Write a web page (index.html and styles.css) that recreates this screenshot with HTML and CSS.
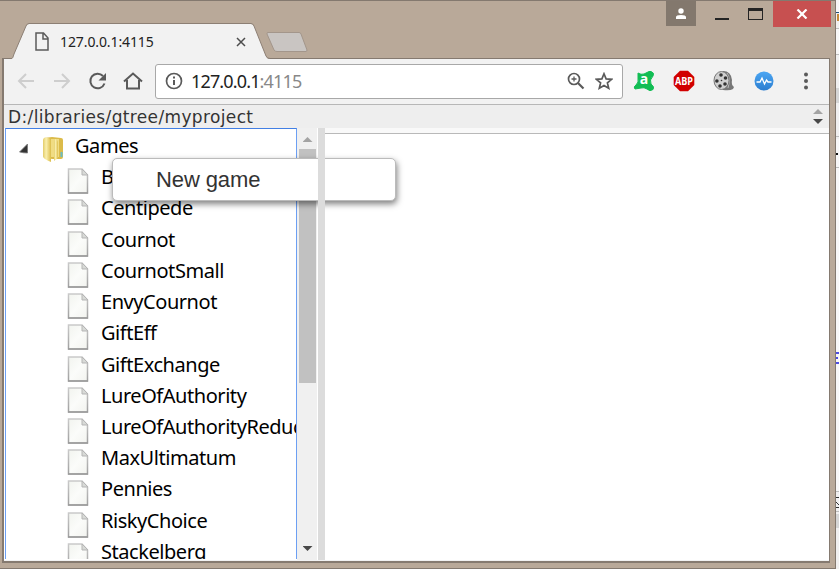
FILE: index.html
```html
<!DOCTYPE html>
<html lang="en">
<head>
<meta charset="utf-8">
<title>127.0.0.1:4115</title>
<link rel="stylesheet" href="styles.css">
</head>
<body>
<svg class="defs" width="0" height="0">
  <defs>
    <linearGradient id="pageFill" x1="0" y1="0" x2="1" y2="1"><stop offset="0" stop-color="#f2f4ef"/><stop offset=".5" stop-color="#fbfcfa"/><stop offset="1" stop-color="#f2f3ef"/></linearGradient>
    <linearGradient id="pageEdge" x1="0" y1="0" x2="0" y2="1"><stop offset="0" stop-color="#cacaca"/><stop offset="1" stop-color="#a0a0a0"/></linearGradient>
    <linearGradient id="gold" x1="0" y1="0" x2="1" y2="0"><stop offset="0" stop-color="#e3cc69"/><stop offset=".4" stop-color="#faefad"/><stop offset="1" stop-color="#dcbd4b"/></linearGradient>
    <linearGradient id="blue" x1="0" y1="0" x2="0" y2="1"><stop offset="0" stop-color="#4ba6f3"/><stop offset="1" stop-color="#2c7ed0"/></linearGradient>
    <symbol id="file" viewBox="0 0 22 26"><path d="M1.500 1h13.500l5.500 6v18h-19z" fill="url(#pageFill)" stroke="url(#pageEdge)" stroke-width="1.500"/><path d="M1 25h20" stroke="#999" stroke-width="1.300"/><path d="M15 1v6h6z" fill="#d8dad7" stroke="#b5b5b5"/></symbol>
  </defs>
</svg>
<div class="desktop">
  <div class="window">
    <header class="titlebar">
      <div class="tab">
        <svg class="tab-shape" width="260" height="37" viewBox="0 0 260 37"><path d="M0 36C3 36 3 34 4 31L16 3Q17 1 19 1H241Q243 1 244 3L256 33Q257 36 260 36V37H0z" fill="#f2f2f2"/><path d="M0 35.500C3 36 3 34 4 31L16 3Q17 .5 19 .5H241Q243 .5 244 3L256 33Q257 35.500 260 35.500" fill="none" stroke="#8c7f74"/></svg>
        <svg class="tab-file" width="14" height="19" viewBox="0 0 14 19"><path d="M1 1h7.500L13 6v12H1zM8 1v6h5" fill="none" stroke="#5b5b5b" stroke-width="1.500"/></svg>
        <span class="tab-title">127.0.0.1:4115</span>
        <svg class="tab-close" width="10" height="10" viewBox="0 0 10 10"><path d="M1 1l8 8M9 1L1 9" stroke="#4c4c4c" stroke-width="1.500"/></svg>
      </div>
      <svg class="new-tab" width="44" height="22" viewBox="0 0 44 22"><path d="M3 1.500H34Q35.500 1.500 36 3L42 19Q42 20.500 41 20.500H12Q10 20.500 9 19L2 3Q1.500 1.500 3 1.500z" fill="#c9c5c2" stroke="#a3968b"/></svg>
      <div class="controls">
        <span class="profile"><svg width="12" height="12" viewBox="0 0 12 12" fill="#fff"><circle cx="6" cy="3" r="2.700"/><path d="M1 11V9Q1 7 6 7t5 2v2z"/></svg></span>
        <span class="min"></span>
        <span class="max"></span>
        <span class="close"><svg width="12" height="10" viewBox="0 0 12 10"><path d="M1.500.5l9 9M10.500.5l-9 9" stroke="#fff" stroke-width="2.200"/></svg></span>
      </div>
    </header>
    <main class="client">
      <div class="toolbar">
        <svg class="nav" width="132" height="24" viewBox="0 0 132 24" fill="none" stroke="#5a5a5a" stroke-width="2">
          <path d="M21 12H6M13 5l-7 7 7 7M41 12h15M49 5l7 7-7 7" stroke="#cecece"/>
          <path d="M90 7A7.300 7.300 0 1 0 91.500 14.500"/><path d="M93 4v7.500h-7.500z" fill="#5a5a5a" stroke="none"/>
          <path d="M111 12.500l9-8 9 8M114 11v8.500h12V11"/>
        </svg>
        <div class="address">
          <svg width="18" height="18" viewBox="0 0 18 18" fill="none" stroke="#5a5a5a"><circle cx="9" cy="9" r="7.500" stroke-width="1.700"/><path d="M9 8v5M9 4.500v2" stroke-width="2"/></svg>
          <span class="url">127.0.0.1<span class="port">:4115</span></span>
          <svg class="zoom" width="18" height="18" viewBox="0 0 18 18" fill="none" stroke="#5a5a5a"><circle cx="7" cy="7" r="5.500" stroke-width="1.700"/><path d="M4.500 7h5M7 4.500v5" stroke-width="1.300"/><path d="M11 11l5.500 5.500" stroke-width="2.200"/></svg>
          <svg class="star" width="18" height="18" viewBox="0 0 18 18"><path d="M9 1.800l2.100 5.100 5.500.4-4.200 3.600 1.300 5.300L9 13.400l-4.700 2.800 1.300-5.300-4.200-3.600 5.500-.4z" fill="none" stroke="#5a5a5a" stroke-width="1.700"/></svg>
        </div>
        <svg class="ext" width="22" height="22" viewBox="0 0 22 22"><path d="M5 3Q8 5 11 4L14 2.500Q16 1 18 1.500Q22 3 20 6Q16 10 18 14Q22 17 20 19.500Q17 22 14 19Q11 17 8 18L2 19Q0 17 3 15Q6 12 5 9z" fill="#12bd54" stroke="#12bd54"/><text x="6.800" y="14" class="avast">a</text></svg>
        <svg class="ext" width="22" height="22" viewBox="0 0 22 22"><path d="M7 .7h8L21.300 7v8L15 21.300H7L.7 15V7z" fill="#d10000"/><text x="2" y="15" class="abp" textLength="18" lengthAdjust="spacingAndGlyphs">ABP</text></svg>
        <svg class="ext" width="22" height="22" viewBox="0 0 22 22"><path d="M10 1Q18 1 19 10Q18 15 21 17L20 19Q17 21 10 20z" fill="#777"/><path d="M14 3q4 5 1 15" stroke="#bbb" fill="none"/><ellipse cx="8.500" cy="10.500" rx="7.500" ry="9" fill="#cfcfcf" stroke="#777"/><g fill="#333"><circle cx="8" cy="5" r="1.800"/><circle cx="12.500" cy="8" r="1.800"/><circle cx="12" cy="14" r="1.800"/><circle cx="7" cy="16" r="1.800"/><circle cx="3.900" cy="11" r="1.800"/><circle cx="8.500" cy="10.500" r=".8"/></g></svg>
        <svg class="ext" width="22" height="22" viewBox="0 0 22 22"><circle cx="11" cy="11" r="9.500" fill="url(#blue)"/><path d="M3.500 12H7l2-4 2.500 6 2-4 1.500 2h3.500" fill="none" stroke="#fff" stroke-width="1.300"/></svg>
        <svg class="dots" width="6" height="18" viewBox="0 0 6 18" fill="#5a5a5a"><circle cx="3" cy="2.500" r="2"/><circle cx="3" cy="9" r="2"/><circle cx="3" cy="15.500" r="2"/></svg>
      </div>
      <div class="pathbar"><span class="path">D:/libraries/gtree/myproject</span><svg width="10" height="16" viewBox="0 0 10 16"><path d="M0 5l5-5 5 5z" fill="#a3a3a3"/><path d="M0 10h10l-5 5z" fill="#484848"/></svg></div>
      <div class="panes">
        <div class="tree">
          <div class="row root"><svg width="50" height="28" viewBox="0 0 50 28"><path d="M1.500 16L9.500 8v9q-4 0-8-1z" fill="#333" stroke="#777" stroke-width=".8"/><path d="M26 2l8-1 9 1q2 0 2 2v17q0 2-2 2h-9l-8-2q-1 0-1-2z" fill="#dcbb4a"/><path d="M33 3h8v18h-8z" fill="#f0dc83"/><path d="M27 1.500q5 0 6 2.500v22q-3-1-6-3-2-1-2-3V4q0-2 2-2.500z" fill="url(#gold)"/><path d="M37 3q3 1 3 3v16l-4 3V6z" fill="url(#gold)"/><path d="M43.500 16v5" stroke="#69bcc4" stroke-width="2"/></svg><span class="label">Games</span></div>
          <div class="row"><svg class="file"><use href="#file"/></svg><span class="label">B</span></div>
          <div class="row"><svg class="file"><use href="#file"/></svg><span class="label">Centipede</span></div>
          <div class="row"><svg class="file"><use href="#file"/></svg><span class="label">Cournot</span></div>
          <div class="row"><svg class="file"><use href="#file"/></svg><span class="label">CournotSmall</span></div>
          <div class="row"><svg class="file"><use href="#file"/></svg><span class="label">EnvyCournot</span></div>
          <div class="row"><svg class="file"><use href="#file"/></svg><span class="label">GiftEff</span></div>
          <div class="row"><svg class="file"><use href="#file"/></svg><span class="label">GiftExchange</span></div>
          <div class="row"><svg class="file"><use href="#file"/></svg><span class="label">LureOfAuthority</span></div>
          <div class="row"><svg class="file"><use href="#file"/></svg><span class="label">LureOfAuthorityReduced</span></div>
          <div class="row"><svg class="file"><use href="#file"/></svg><span class="label">MaxUltimatum</span></div>
          <div class="row"><svg class="file"><use href="#file"/></svg><span class="label">Pennies</span></div>
          <div class="row"><svg class="file"><use href="#file"/></svg><span class="label">RiskyChoice</span></div>
          <div class="row"><svg class="file"><use href="#file"/></svg><span class="label">Stackelberg</span></div>
        </div>
        <div class="scrollbar"><i class="up"></i><i class="thumb"></i><i class="down"></i></div>
        <div class="splitter"></div>
        <div class="detail"></div>
        <div class="menu">New game</div>
      </div>
    </main>
  </div>
  <svg class="behind" width="3" height="569" viewBox="0 0 3 569"><path d="M0 0h3v12H0zM0 29h3v25H0zM0 139h3v352H0z" fill="#f8f7f7"/><path d="M0 88h3v15H0zM0 514h3v14H0z" fill="#d6d6d6"/><path d="M0 12.500h3" stroke="#205078"/><path d="M0 28.500h3M0 54.500h3M0 136.500h3M0 167.500h3M0 491.500h3M0 511.500h3" stroke="#bdbdbd"/><path d="M1 14h2v7H1z" fill="#c68b39"/><path d="M0 153h2v2H0z" fill="#111"/><path d="M0 353h3M0 358h2M0 363h3" stroke="#4e4ee4" stroke-width="2"/><path d="M0 497.500h3M0 502l3 3M0 507.500h3" stroke="#333"/></svg>
</div>
</body>
</html>
```
FILE: styles.css
```css
* { box-sizing: border-box; }
body { margin: 0; font-family: "Noto Sans", sans-serif; overflow: hidden; }
svg { display: block; flex: none; }
.defs { position: absolute; }
.desktop { display: flex; width: 839px; height: 569px; background: #f1f0f0; }
.window { width: 836px; height: 569px; flex: none; padding: 0 4px 6px 2px; background: #b9a999; border: solid #84796f; border-width: 1px 1px 1px 0; }
.titlebar { height: 57px; display: flex; align-items: flex-start; }
.tab { position: relative; width: 260px; height: 37px; margin: 22px 0 0 8px; display: flex; align-items: center; flex: none; }
.tab-shape { position: absolute; left: 0; top: 0; }
.tab-file { margin-left: 25px; position: relative; }
.tab-title { position: relative; width: 150px; margin-left: 11px; margin-top: -1px; font-size: 14px; letter-spacing: -.1px; color: #222; }
.tab-close { position: relative; margin-left: 26px; }
.new-tab { margin: 30px 0 0 -5px; }
.controls { display: flex; margin-left: auto; height: 26px; margin-right: 0; }
.profile { width: 30px; height: 25px; background: #83786d; display: grid; place-items: center; }
.min { width: 14px; height: 2px; background: #242424; margin: 17px 0 0 19px; }
.max { width: 15px; height: 12px; border: 1px solid #242424; border-top-width: 3px; margin: 7px 0 0 19px; }
.close { width: 58px; height: 26px; background: #c75050; display: grid; place-items: center; margin-left: 10px; }
.client { height: 505px; width: 828px; border: 2px solid #857a70; border-width: 1px 1px 2px 2px; background: #f2f2f2; overflow: hidden; }
.toolbar { height: 46px; display: flex; align-items: center; padding: 0 20px 1px 9px; border-bottom: 1px solid #b7b7b7; }
.nav { width: 132px; }
.address { display: flex; align-items: center; width: 468px; height: 35px; margin-left: 10px; padding: 0 9px; background: #fff; border: 1px solid #a8a8a8; border-radius: 3px; }
.url { margin-left: 8px; font-size: 18px; letter-spacing: -.85px; color: #222; }
.port { color: #888; }
.zoom { margin-left: auto; }
.star { margin-left: 10px; }
.ext { margin-left: 18px; }
.address + .ext { margin-left: 10px; }
.dots { margin-left: auto; }
.avast { font: bold 14px "Open Sans"; fill: #fff; }
.abp { font: bold 11px "Open Sans"; fill: #fff; }
.pathbar { height: 23px; display: flex; align-items: center; padding: 0 6px 0 4px; background: #eee; }
.pathbar svg { margin-left: auto; }
.path { font: 17px/23px "DejaVu Sans", sans-serif; letter-spacing: .36px; padding-top: 2px; color: #333; }
.panes { position: relative; display: flex; height: 432px; background: #fff; }
.tree { width: 292px; margin-left: 1px; height: 431px; border: 1px solid #6c9ff3; border-bottom: 0; border-top-color: #427fe4; overflow: hidden; background: #fff; flex: none; }
.row { height: 31.23px; display: flex; align-items: flex-start; padding-left: 61px; white-space: nowrap; }
.root { padding-left: 12px; }
.root svg { margin-top: 7px; }
.file { width: 22px; height: 26px; margin-top: 8px; }
.label { font-size: 20px; line-height: 33px; margin-left: 12px; letter-spacing: -.45px; color: #000; }
.root .label { margin-left: 7px; }
.scrollbar { width: 20px; padding: 9px 1px 9px 2px; background: #f0f0f0; display: flex; flex-direction: column; align-items: center; flex: none; }
.up, .down { width: 10px; height: 5px; background: #a3a3a3; clip-path: polygon(50% 0, 100% 100%, 0 100%); }
.down { background: #484848; clip-path: polygon(0 0, 100% 0, 50% 100%); margin-top: auto; }
.thumb { width: 17px; height: 234px; margin-top: 7px; background: #c1c1c1; }
.splitter { width: 7px; margin-left: 1px; background: #dcdcdc; position: relative; z-index: 2; flex: none; }
.detail { flex: 1; border-top: 5px solid #f9f9f9; box-shadow: inset 0 1px #b9b9b9; }
.menu { position: absolute; left: 108px; top: 30px; width: 284px; height: 43px; padding-left: 43px; font: 22px/41px "Liberation Sans", sans-serif; letter-spacing: -.1px; color: #333; background: #fff; border: 1px solid #bbb; border-radius: 5px; box-shadow: 1px 3px 6px rgba(0,0,0,.5); z-index: 1; }
```
